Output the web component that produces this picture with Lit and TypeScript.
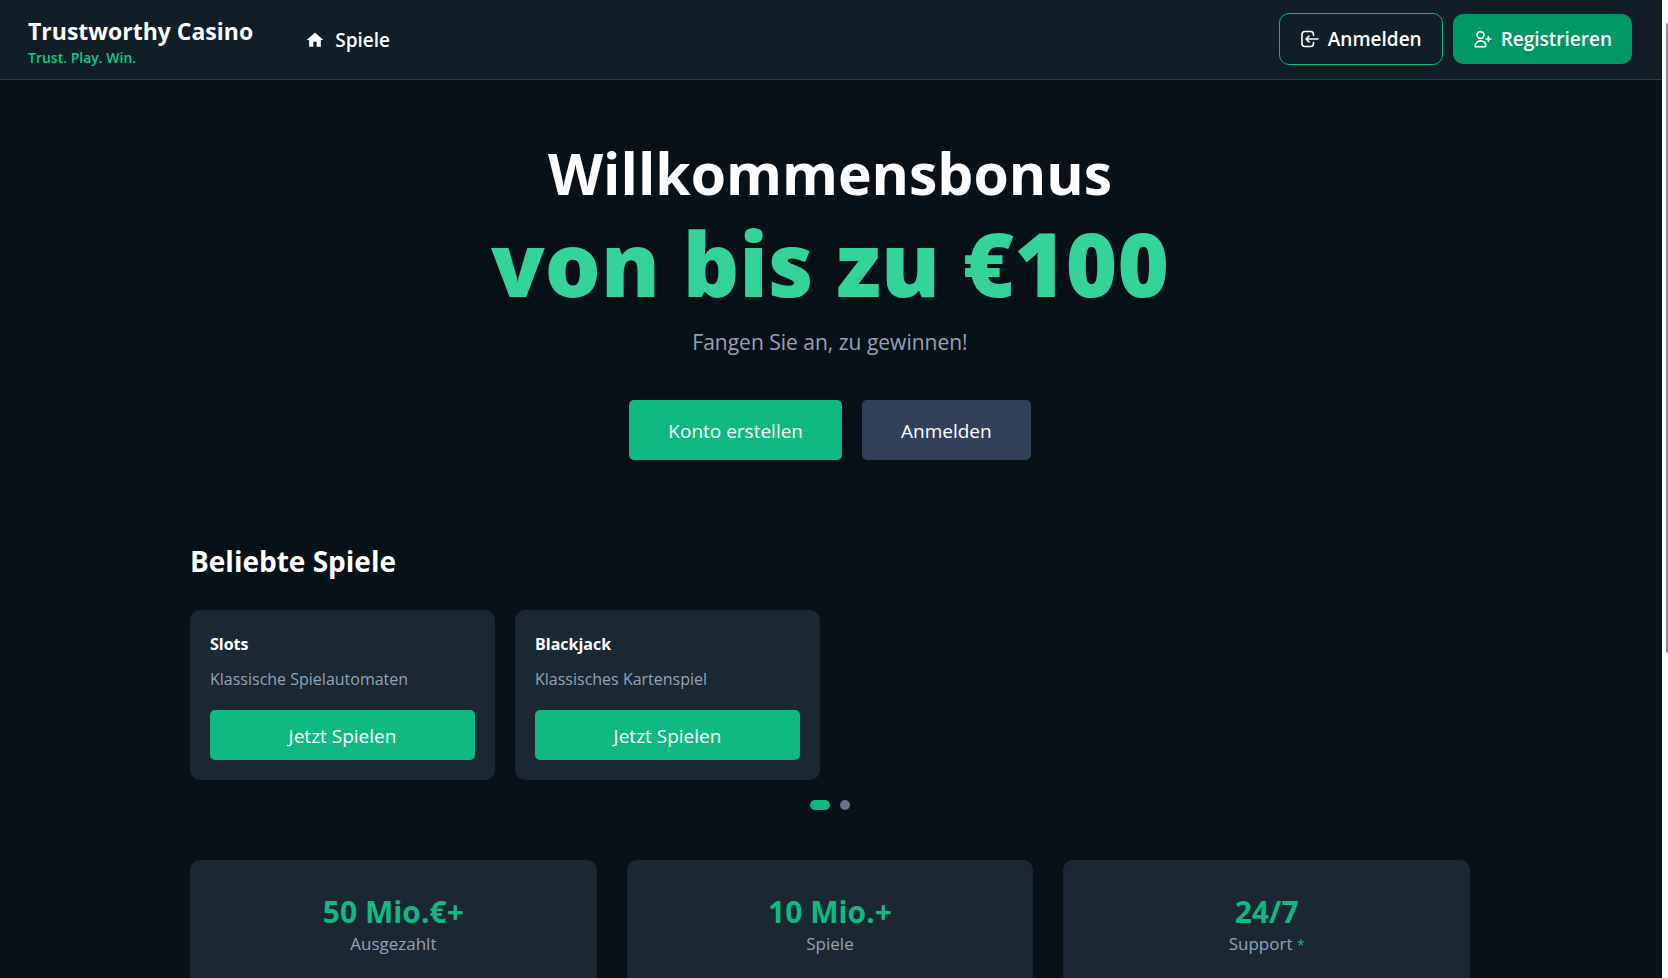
import { LitElement, html, css } from "lit";
import { customElement, property } from "lit/decorators.js";

const homeIcon = html`<svg class="icon" viewBox="0 0 24 24" fill="currentColor" aria-hidden="true">
  <path d="M10 20v-6h4v6h5v-8h3L12 3 2 12h3v8z" />
</svg>`;

const loginIcon = html`<svg class="icon" viewBox="0 0 20 20" fill="none" stroke="currentColor" stroke-width="1.6"
  stroke-linecap="round" stroke-linejoin="round" aria-hidden="true">
  <path d="M13.500 6.500V5.500a3 3 0 0 0-3-3H5a3 3 0 0 0-3 3v9a3 3 0 0 0 3 3h5.500a3 3 0 0 0 3-3v-1" />
  <path d="M18 10H6M9 7l-3 3 3 3" />
</svg>`;

const registerIcon = html`<svg class="icon" viewBox="0 0 20 20" fill="none" stroke="currentColor" stroke-width="1.6"
  stroke-linecap="round" stroke-linejoin="round" aria-hidden="true">
  <circle cx="7.500" cy="6" r="3.400" />
  <path d="M2.200 17.700c0-3.600 1.900-5.800 5.300-5.800s5.300 2.200 5.300 5.800zM15.400 7.500v5M12.900 10h5" />
</svg>`;

const games = [
  { name: "Slots", text: "Klassische Spielautomaten" },
  { name: "Blackjack", text: "Klassisches Kartenspiel" },
];

const stats = [
  { value: "50 Mio.€+", label: "Ausgezahlt", note: false },
  { value: "10 Mio.+", label: "Spiele", note: false },
  { value: "24/7", label: "Support", note: true },
];

@customElement("game-card")
class GameCard extends LitElement {
  @property() name = "";
  @property() text = "";

  static styles = css`
    :host {
      display: flex;
      flex-direction: column;
      padding: 20px;
      border-radius: 10px;
      background: #1b2733;
    }
    .name {
      margin: 0 0 8px;
      font-size: 16px;
      line-height: 28px;
      font-weight: 700;
      color: #fff;
    }
    .text {
      margin: 0 0 18px;
      font-size: 16px;
      line-height: 26px;
      color: #94a3b8;
    }
    .play {
      height: 50px;
      padding: 2px 20px 0;
      border: 0;
      border-radius: 5px;
      background: #10b981;
      color: #fff;
      font: inherit;
      font-size: 19px;
      cursor: pointer;
    }
  `;

  render() {
    return html`
      <h3 class="name">${this.name}</h3>
      <p class="text">${this.text}</p>
      <button class="play">Jetzt Spielen</button>
    `;
  }
}

@customElement("app-root")
class AppRoot extends LitElement {
  static styles = css`
    :host {
      display: flex;
      height: 100vh;
      overflow: hidden;
      background: #091118;
      color: #fff;
      font-family: "Open Sans", "Noto Sans", sans-serif;
      font-size: 19px;
    }
    .page {
      flex: 1;
      min-width: 0;
    }
    .rail {
      flex: none;
      width: 6px;
      box-sizing: border-box;
      padding: 23px 0 0 4px;
      background: #fff;
    }
    .thumb {
      height: 66%;
      border-radius: 2px 0 0 2px;
      background: #8b8b8b;
    }
    .header {
      display: flex;
      align-items: center;
      height: 78px;
      padding: 0 30px 1px 28px;
      border-bottom: 1px solid #0f4a44;
      background: #121e27;
    }
    .brand {
      padding-top: 4px;
      color: #fff;
      text-decoration: none;
    }
    .brand-name {
      display: block;
      font-size: 23px;
      line-height: 34px;
      font-weight: 700;
    }
    .brand-claim {
      display: block;
      font-size: 14px;
      line-height: 20px;
      font-weight: 600;
      color: #05ce89;
    }
    .nav {
      display: flex;
      flex: 1;
      padding: 2px 0 0 52px;
    }
    .link {
      display: flex;
      align-items: center;
      gap: 10px;
      font-weight: 600;
      color: #fff;
      text-decoration: none;
    }
    .icon {
      display: block;
      width: 20px;
      height: 20px;
    }
    .account {
      display: flex;
      align-items: center;
      gap: 10px;
    }
    .action {
      display: flex;
      align-items: center;
      gap: 8px;
      height: 50px;
      padding: 0 20px;
      border: 0;
      border-radius: 10px;
      background: #009966;
      color: #fff;
      font: inherit;
      font-weight: 600;
      cursor: pointer;
    }
    .action.outline {
      height: 52px;
      border: 1px solid #00bc7d;
      background: none;
    }
    main {
      padding-right: 2px;
    }
    .hero {
      display: flex;
      flex-direction: column;
      align-items: center;
      padding: 58px 20px 80px;
      text-align: center;
    }
    .title {
      margin: 0;
      font-size: 57px;
      line-height: 70px;
      font-weight: 700;
    }
    .amount {
      display: block;
      font-size: 88px;
      line-height: 110px;
      font-weight: 800;
      color: #34d399;
    }
    .lead {
      margin: 6px 0 40px;
      font-size: 21px;
      line-height: 36px;
      color: #94a3b8;
    }
    .choices {
      display: flex;
      gap: 20px;
    }
    .choice {
      height: 60px;
      padding: 2px 39px 0;
      border: 0;
      border-radius: 5px;
      background: #10b981;
      color: #fff;
      font: inherit;
      cursor: pointer;
    }
    .choice.muted {
      background: #314058;
    }
    .content {
      max-width: 1280px;
      margin: 0 auto;
    }
    .heading {
      margin: 0 0 28px;
      font-size: 28px;
      line-height: 42px;
      font-weight: 700;
    }
    .games {
      display: grid;
      grid-template-columns: repeat(4, 1fr);
      gap: 20px;
    }
    .dots {
      display: flex;
      justify-content: center;
      gap: 10px;
      padding: 20px 0 50px;
    }
    .dot {
      width: 10px;
      height: 10px;
      padding: 0;
      border: 0;
      border-radius: 5px;
      background: #64748b;
      cursor: pointer;
    }
    .dot.current {
      width: 20px;
      background: #10b981;
    }
    .stats {
      display: grid;
      grid-template-columns: repeat(3, 1fr);
      gap: 30px;
    }
    .stat {
      padding: 30px;
      border-radius: 10px;
      background: #1b2733;
      text-align: center;
    }
    .value {
      margin: 0;
      font-size: 30px;
      line-height: 44px;
      font-weight: 700;
      color: #10b981;
    }
    .label {
      margin: 0;
      padding-bottom: 30px;
      font-size: 17px;
      line-height: 20px;
      color: #94a3b8;
    }
    .note {
      font-size: 14px;
      color: #10b981;
    }
  `;

  render() {
    return html`
      <div class="page">
        <header class="header">
          <a class="brand" href="#">
            <span class="brand-name">Trustworthy Casino</span>
            <span class="brand-claim">Trust. Play. Win.</span>
          </a>
          <nav class="nav"><a class="link" href="#spiele">${homeIcon}Spiele</a></nav>
          <div class="account">
            <button class="action outline">${loginIcon}Anmelden</button>
            <button class="action">${registerIcon}Registrieren</button>
          </div>
        </header>
        <main>
          <section class="hero">
            <h1 class="title">Willkommensbonus <span class="amount">von bis zu €100</span></h1>
            <p class="lead">Fangen Sie an, zu gewinnen!</p>
            <div class="choices">
              <button class="choice">Konto erstellen</button>
              <button class="choice muted">Anmelden</button>
            </div>
          </section>
          <section class="content" id="spiele">
            <h2 class="heading">Beliebte Spiele</h2>
            <div class="games">
              ${games.map((g) => html`<game-card .name=${g.name} .text=${g.text}></game-card>`)}
            </div>
            <div class="dots">
              <button class="dot current" aria-label="Seite 1"></button>
              <button class="dot" aria-label="Seite 2"></button>
            </div>
            <div class="stats">
              ${stats.map(
                (s) => html`<div class="stat">
                  <p class="value">${s.value}</p>
                  <p class="label">${s.label}${s.note ? html` <span class="note">*</span>` : ""}</p>
                </div>`
              )}
            </div>
          </section>
        </main>
      </div>
      <div class="rail"><div class="thumb"></div></div>
    `;
  }
}
